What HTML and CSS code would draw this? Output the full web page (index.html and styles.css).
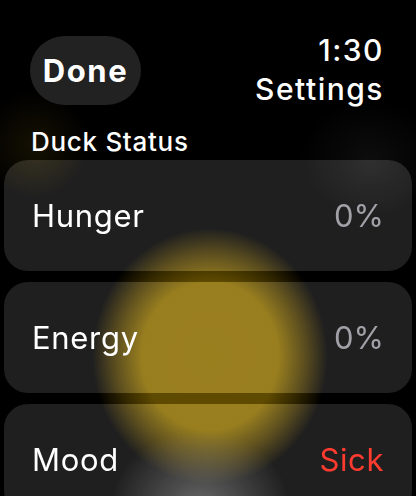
FILE: index.html
```html
<!DOCTYPE html>
<html>
<head>
<meta charset="utf-8">
<link rel="stylesheet" href="styles.css">
</head>
<body>
<div class="screen">
  <div class="glow glow-yellow"></div>
  <div class="glow glow-corner"></div>
  <div class="glow glow-right"></div>
  <div class="glow glow-gray"></div>
  <header class="top">
    <button class="done">Done</button>
    <div class="title">
      <div class="time">1:30</div>
      <div class="name">Settings</div>
    </div>
  </header>
  <div class="section">Duck Status</div>
  <div class="list">
    <div class="row"><span class="label">Hunger</span><span class="value">0%</span></div>
    <div class="row"><span class="label">Energy</span><span class="value">0%</span></div>
    <div class="row"><span class="label">Mood</span><span class="value sick">Sick</span></div>
  </div>
</div>
</body>
</html>
```
FILE: styles.css
```css
html, body {
  margin: 0;
  padding: 0;
  background: #000;
}
.screen {
  position: relative;
  width: 416px;
  height: 496px;
  overflow: hidden;
  background: #000;
  font-family: "Inter", "Noto Sans", sans-serif;
  color: #fff;
}
.glow {
  position: absolute;
  border-radius: 50%;
  pointer-events: none;
}
.glow-yellow {
  left: 92px;
  top: 228px;
  width: 236px;
  height: 256px;
  background: radial-gradient(ellipse closest-side, rgba(96,75,0,1) 0%, rgba(94,74,0,1) 58%, rgba(80,62,0,0.6) 80%, rgba(60,46,0,0) 100%);
}
.glow-corner {
  left: -20px;
  top: 90px;
  width: 110px;
  height: 110px;
  background: radial-gradient(circle closest-side, rgba(70,55,8,0.3) 0%, rgba(60,45,5,0) 100%);
}
.glow-right {
  left: 300px;
  top: 100px;
  width: 140px;
  height: 120px;
  background: radial-gradient(ellipse closest-side, rgba(60,60,60,0.22) 0%, rgba(60,60,60,0) 100%);
}
.glow-gray {
  left: 110px;
  top: 430px;
  width: 180px;
  height: 150px;
  background: radial-gradient(ellipse closest-side, rgba(90,90,90,0.6) 0%, rgba(80,80,80,0) 100%);
}
.top {
  position: relative;
  display: flex;
  justify-content: space-between;
  align-items: flex-start;
  padding: 36px 32px 0 30px;
}
.done {
  width: 111px;
  height: 69px;
  border: none;
  border-radius: 35px;
  background: #222;
  color: #fff;
  font-family: "Inter", "Noto Sans", sans-serif;
  font-weight: 700;
  font-size: 31px;
  padding: 0;
  letter-spacing: 1.6px;
}
.title {
  margin-top: -5px;
  text-align: right;
  font-size: 30px;
  font-weight: 500;
  line-height: 39px;
  letter-spacing: 1.5px;
}
.section {
  position: relative;
  margin: 18px 0 0 31px;
  font-size: 26px;
  font-weight: 500;
  line-height: 30px;
  letter-spacing: 0.7px;
}
.list {
  position: relative;
  display: flex;
  flex-direction: column;
  gap: 11px;
  margin: 3px 4px 0 4px;
}
.row {
  height: 111px;
  border-radius: 24px;
  background: rgba(255,255,255,0.12);
  -webkit-backdrop-filter: brightness(1.47);
  backdrop-filter: brightness(1.47);
  display: flex;
  justify-content: space-between;
  align-items: center;
  padding: 0 28px 0 28px;
  flex-shrink: 0;
}
.label {
  font-size: 31px;
  font-weight: 400;
  letter-spacing: 0.7px;
}
.value {
  font-size: 31px;
  color: #a1a1a8;
  letter-spacing: 0;
}
.value.sick {
  color: #ff3b30;
  letter-spacing: 0.6px;
}
```
